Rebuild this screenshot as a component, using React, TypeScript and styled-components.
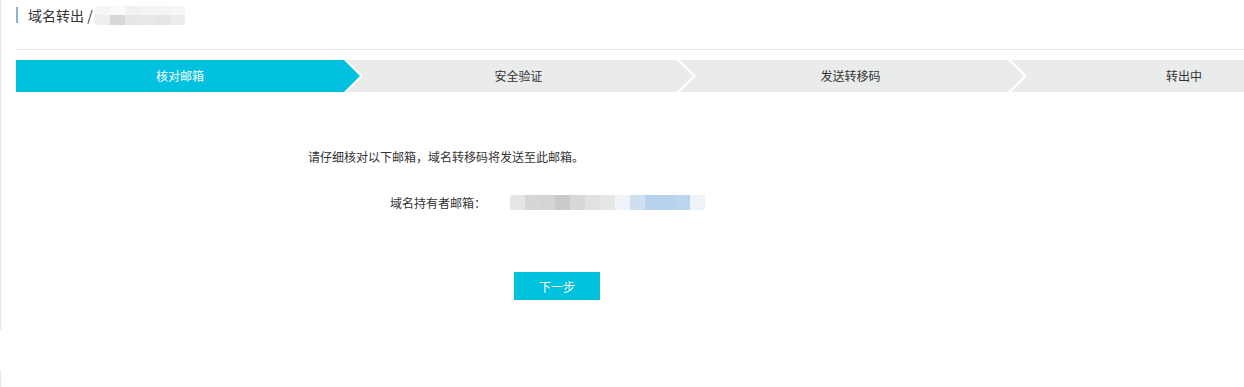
import React from "react";
import styled, { createGlobalStyle } from "styled-components";

const GlobalStyle = createGlobalStyle`
    html, body {
        margin: 0;
        padding: 0;
        background: #fff;
    }
    body {
        font-family: "Noto Sans CJK SC", "Noto Sans", "Liberation Sans", sans-serif;
        color: #333;
        font-size: 12px;
    }
`

const Page = styled.div`
    width: 1244px;
    height: 387px;
    overflow: hidden;
`

const Main = styled.div`
    height: 330px;
    border-left: 1px solid #e3e7ee;
    padding-left: 15px;
    box-sizing: border-box;
`

const Foot = styled.div`
    margin-top: 40px;
    height: 17px;
    border-left: 1px solid #e3e7ee;
`

const Header = styled.div`
    display: flex;
    align-items: center;
    height: 16px;
    padding-top: 7px;
`

const HeaderBar = styled.div`
    width: 2px;
    height: 16px;
    background: #88b4dc;
    margin-right: 10px;
`

const Title = styled.span`
    font-size: 14px;
    line-height: 16px;
    color: #333;
    white-space: pre;
`

const Mosaic = styled.div<{ $cols: number; $cell: number; $rows: number; $rowH: number }>`
    display: grid;
    grid-template-columns: repeat(${(p) => p.$cols}, ${(p) => p.$cell}px);
    grid-template-rows: repeat(${(p) => p.$rows}, ${(p) => p.$rowH}px);
    border-radius: 3px 0 0 3px;
    overflow: hidden;
`

const Cell = styled.div<{ $c: string }>`
    background: ${(p) => p.$c};
`

const Divider = styled.div`
    margin-top: 26px;
    height: 1px;
    background: #e8e8e8;
`

const Steps = styled.div`
    margin-top: 10px;
    display: flex;
    height: 32px;
    overflow: hidden;
    background: #eaebeb;
`

const Step = styled.div<{ $active?: boolean; $last?: boolean; $first?: boolean; $w: number }>`
    position: relative;
    flex: 0 0 ${(p) => p.$w}px;
    box-sizing: border-box;
    padding-left: ${(p) => (p.$first ? 0 : 16)}px;
    height: 32px;
    line-height: 32px;
    text-align: center;
    font-size: 12px;
    color: ${(p) => (p.$active ? "#fff" : "#333")};
    background: ${(p) => (p.$active ? "#00c1de" : "#eaebeb")};

    &::before {
        content: "";
        display: ${(p) => (p.$last ? "none" : "block")};
        position: absolute;
        left: 100%;
        top: 0;
        width: 19px;
        height: 32px;
        background: #fff;
        z-index: 1;
        clip-path: polygon(0 0, 3px 0, 19px 50%, 3px 100%, 0 100%);
    }

    &::after {
        content: "";
        display: ${(p) => (p.$last ? "none" : "block")};
        position: absolute;
        left: 100%;
        top: 0;
        width: 16px;
        height: 32px;
        background: ${(p) => (p.$active ? "#00c1de" : "#eaebeb")};
        z-index: 2;
        clip-path: polygon(0 0, 16px 50%, 0 100%);
    }
`

const Content = styled.div`
    padding-left: 292px;
    padding-top: 56px;
`

const Intro = styled.p`
    margin: 0;
    font-size: 12px;
    line-height: 18px;
    color: #333;
`

const FormRow = styled.div`
    display: flex;
    align-items: center;
    margin-top: 29px;
    height: 15px;
`

const Label = styled.div`
    width: 178px;
    text-align: right;
    font-size: 12px;
    line-height: 15px;
    color: #333;
`

const Value = styled.div`
    margin-left: 24px;
`

const PrimaryButton = styled.button`
    margin-top: 62px;
    margin-left: 206px;
    width: 86px;
    height: 28px;
    border: none;
    background: #00c1de;
    color: #fff;
    font-family: inherit;
    font-size: 12px;
    cursor: pointer;
    padding: 0;
`

const titleBlur = [
    "#f5f5f5", "#fafafa", "#f2f2f1", "#f3f4f5", "#f4f4f4", "#f6f6f6",
    "#eeeeee", "#d9d8d6", "#e8e7e5", "#e8e8e8", "#e4e6e6", "#ececec",
];

const emailBlur = [
    "#e5e5e3", "#d6d6d6", "#d4d4d2", "#c9cacc", "#d8d8d8", "#e2e0e1", "#e5e6e5",
    "#f0f3f8", "#d0dff0", "#b7d1ee", "#b7d1ee", "#bcd5ef", "#eef3f8",
];

const steps = [
    { label: "核对邮箱", width: 328 },
    { label: "安全验证", width: 333 },
    { label: "发送转移码", width: 331 },
    { label: "转出中", width: 336 },
];

const App = () => {
    return (
        <Page>
            <GlobalStyle />
            <Main>
                <Header>
                    <HeaderBar />
                    <Title>域名转出 /</Title>
                    <Mosaic $cols={6} $cell={15} $rows={2} $rowH={9.5} style={{ marginLeft: 2 }}>
                        {titleBlur.map((c, i) => (
                            <Cell key={i} $c={c} />
                        ))}
                    </Mosaic>
                </Header>
                <Divider />
                <Steps>
                    {steps.map((s, i) => (
                        <Step
                            key={s.label}
                            $w={s.width}
                            $first={i === 0}
                            $active={i === 0}
                            $last={i === steps.length - 1}
                        >
                            {s.label}
                        </Step>
                    ))}
                </Steps>
                <Content>
                    <Intro>请仔细核对以下邮箱，域名转移码将发送至此邮箱。</Intro>
                    <FormRow>
                        <Label>域名持有者邮箱：</Label>
                        <Value>
                            <Mosaic $cols={13} $cell={15} $rows={1} $rowH={15}>
                                {emailBlur.map((c, i) => (
                                    <Cell key={i} $c={c} />
                                ))}
                            </Mosaic>
                        </Value>
                    </FormRow>
                    <PrimaryButton>下一步</PrimaryButton>
                </Content>
            </Main>
            <Foot />
        </Page>
    );
};

export default App;
